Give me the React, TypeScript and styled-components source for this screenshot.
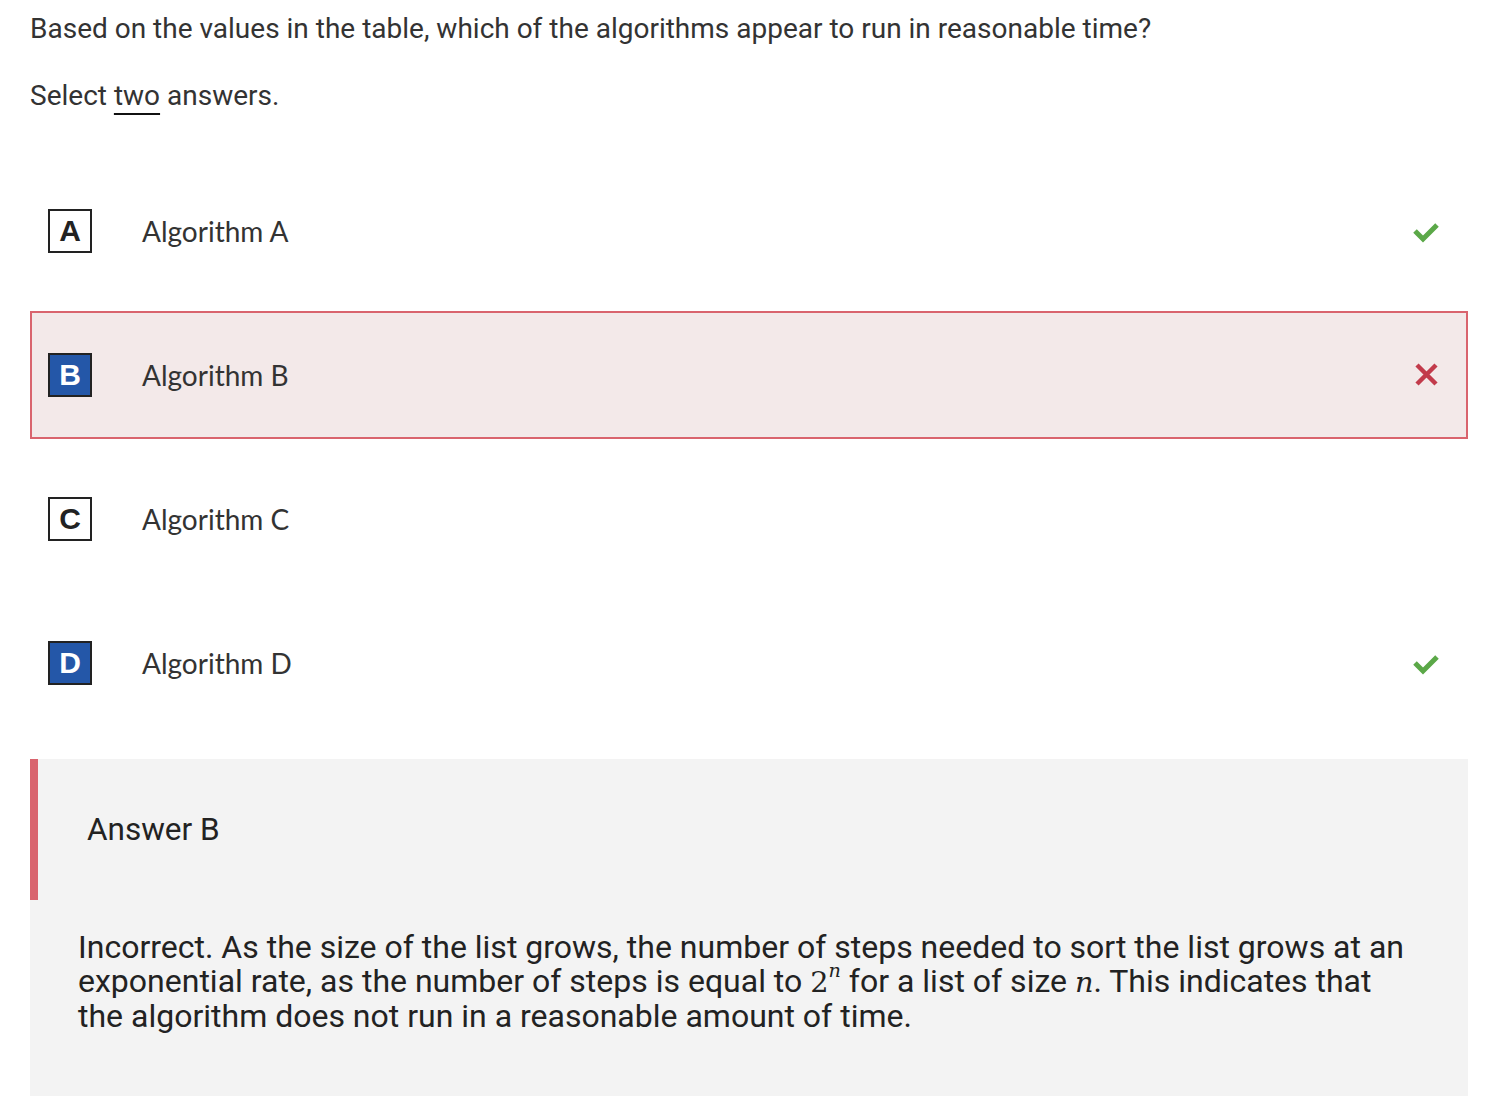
import React from "react";
import styled, { createGlobalStyle } from "styled-components";

const Global = createGlobalStyle`
  html, body { margin: 0; padding: 0; background: #ffffff; }
  body { font-family: Roboto, "Liberation Sans", sans-serif; color: #333; }
`;

const Page = styled.div`
  padding: 0 18px 0 30px;
  display: flex;
  flex-direction: column;
`;

const Prompt = styled.p`
  margin: 12px 0 0;
  font-size: 28px;
  line-height: 34px;
  color: #333;
`;

const Instruction = styled.p`
  margin: 33px 0 0;
  font-size: 28px;
  line-height: 34px;
  color: #333;
`;

const Emph = styled.span`
  text-decoration: underline;
  text-decoration-thickness: 2px;
  text-underline-offset: 8px;
  text-decoration-color: #111;
`;

const Options = styled.div`
  margin-top: 54px;
  display: flex;
  flex-direction: column;
  gap: 16px;
`;

const Row = styled.div<{ $wrong?: boolean }>`
  height: 128px;
  box-sizing: border-box;
  display: flex;
  align-items: center;
  padding: 0 25px 0 16px;
  border: 2px solid ${(p) => (p.$wrong ? "#d9646e" : "transparent")};
  background: ${(p) => (p.$wrong ? "#f3e9e9" : "transparent")};
`;

const Letter = styled.div<{ $selected?: boolean }>`
  width: 44px;
  height: 44px;
  box-sizing: border-box;
  border: 2px solid #222;
  background: ${(p) => (p.$selected ? "#2457a8" : "#fff")};
  color: ${(p) => (p.$selected ? "#fff" : "#222")};
  font-family: "Liberation Sans", Arial, sans-serif;
  font-weight: 700;
  font-size: 30px;
  line-height: 1;
  display: flex;
  align-items: center;
  justify-content: center;
  flex: none;
`;

const Label = styled.div`
  margin-left: 50px;
  flex: 1;
  font-family: Lato, "Open Sans", sans-serif;
  font-size: 28px;
  color: #333;
`;

const Mark = styled.svg`
  width: 30px;
  height: 30px;
  flex: none;
`;

const Feedback = styled.div`
  margin-top: 32px;
  background: #f3f3f3;
  min-height: 337px;
  display: flex;
  flex-direction: column;
`;

const FeedbackHead = styled.div`
  height: 141px;
  border-left: 8px solid #d9646e;
  box-sizing: border-box;
  display: flex;
  align-items: center;
  padding-left: 49px;
  font-size: 31.5px;
  color: #222;
`;

const Explanation = styled.p`
  margin: 30px 0 0;
  padding: 0 55px 0 48px;
  font-size: 32px;
  line-height: 34px;
  color: #222;
`;

const MathVar = styled.span`
  font-family: "DejaVu Serif", "Liberation Serif", serif;
  font-style: italic;
  font-size: 0.9em;
`;

const MathNum = styled.span`
  font-family: "DejaVu Serif", "Liberation Serif", serif;
  font-size: 0.9em;
`;

const Sup = styled.sup`
  font-family: "DejaVu Serif", "Liberation Serif", serif;
  font-style: italic;
  font-size: 0.6em;
  vertical-align: 0.8em;
  line-height: 0;
`;

const Check = () => (
  <Mark viewBox="0 0 30 30">
    <path d="M4 15 L12 23 L26 9" fill="none" stroke="#5ba848" strokeWidth="5" />
  </Mark>
);

const Cross = () => (
  <Mark viewBox="0 0 30 30">
    <path d="M6 5 L25 24 M25 5 L6 24" fill="none" stroke="#c23b4b" strokeWidth="4.5" />
  </Mark>
);

const options = [
  { l: "A", text: "Algorithm A", selected: false, mark: "check" },
  { l: "B", text: "Algorithm B", selected: true, mark: "cross" },
  { l: "C", text: "Algorithm C", selected: false, mark: "" },
  { l: "D", text: "Algorithm D", selected: true, mark: "check" },
];

export default function App() {
  return (
    <>
      <Global />
      <Page>
        <Prompt>Based on the values in the table, which of the algorithms appear to run in reasonable time?</Prompt>
        <Instruction>
          Select <Emph>two</Emph> answers.
        </Instruction>
        <Options>
          {options.map((o) => (
            <Row key={o.l} $wrong={o.mark === "cross"}>
              <Letter $selected={o.selected}>{o.l}</Letter>
              <Label>{o.text}</Label>
              {o.mark === "check" && <Check />}
              {o.mark === "cross" && <Cross />}
            </Row>
          ))}
        </Options>
        <Feedback>
          <FeedbackHead>Answer B</FeedbackHead>
          <Explanation>
            Incorrect. As the size of the list grows, the number of steps needed to sort the list grows at an
            exponential rate, as the number of steps is equal to <MathNum>2</MathNum>
            <Sup>n</Sup> for a list of size <MathVar>n</MathVar>. This indicates that the algorithm does not run in a
            reasonable amount of time.
          </Explanation>
        </Feedback>
      </Page>
    </>
  );
}
